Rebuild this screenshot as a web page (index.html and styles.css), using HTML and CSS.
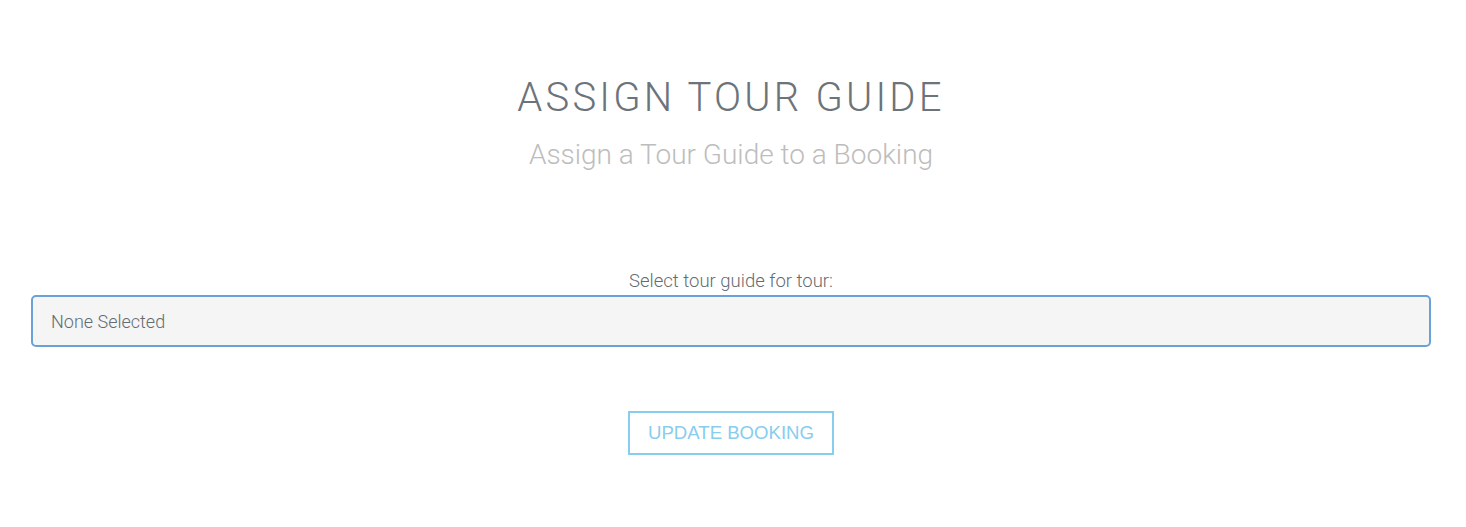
FILE: index.html
```html
<!DOCTYPE html>
<html>
<head>
<meta charset="utf-8">
<link rel="stylesheet" href="styles.css">
</head>
<body>
<div class="page">
  <header class="hero">
    <h1 class="title">ASSIGN TOUR GUIDE</h1>
    <p class="subtitle">Assign a Tour Guide to a Booking</p>
  </header>
  <form class="form">
    <label class="label" for="guide">Select tour guide for tour:</label>
    <div class="select">None Selected</div>
    <div class="actions">
      <button type="button" class="btn">UPDATE BOOKING</button>
    </div>
  </form>
</div>
</body>
</html>
```
FILE: styles.css
```css
html, body {
  margin: 0;
  padding: 0;
  background: #fff;
}
body {
  font-family: Roboto, "Noto Sans", sans-serif;
}
.page {
  padding: 74px 35px 0 31px;
}
.hero {
  text-align: center;
}
.title {
  margin: 0;
  font-weight: 300;
  font-size: 40px;
  line-height: 48px;
  letter-spacing: 3.2px;
  color: #6c737a;
}
.subtitle {
  margin: 16px 0 0;
  font-weight: 300;
  font-size: 28px;
  line-height: 34px;
  color: #bdbdbd;
}
.form {
  margin-top: 97px;
  display: flex;
  flex-direction: column;
}
.label {
  text-align: center;
  font-weight: 300;
  font-size: 18.5px;
  line-height: 24px;
  color: #646b72;
  margin-bottom: 2px;
}
.select {
  height: 48px;
  box-sizing: content-box;
  border: 2px solid #6aa2d8;
  border-radius: 5px;
  background: #f5f5f5;
  padding: 0 18px;
  display: flex;
  align-items: center;
  font-weight: 300;
  font-size: 18px;
  color: #646b72;
}
.actions {
  display: flex;
  justify-content: center;
  margin-top: 64px;
}
.btn {
  width: 206px;
  height: 44px;
  background: #fff;
  border: 2px solid #87cdee;
  color: #87cdee;
  font-family: "Liberation Sans", Arial, sans-serif;
  font-size: 18.6px;
  padding: 0;
  cursor: pointer;
}
```
